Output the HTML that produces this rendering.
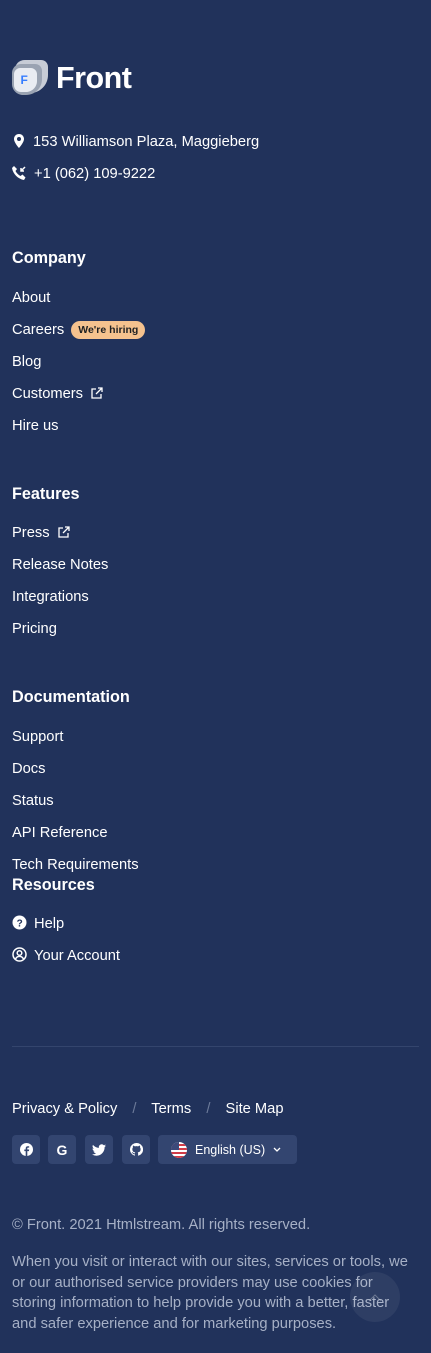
<!DOCTYPE html>
<html><head><meta charset="utf-8"><style>
*{margin:0;padding:0;box-sizing:border-box}
body{width:431px;height:1353px;background:#21325b;font-family:"Liberation Sans",Arial,sans-serif;color:#fff;position:relative;overflow:hidden}
.a{position:absolute;left:12px;white-space:nowrap;font-size:14.7px;line-height:20px}
.h{position:absolute;left:12px;font-size:16.2px;font-weight:bold;line-height:20px}
.ic{display:inline-block;vertical-align:-2px;margin-right:7px}
.badge{display:inline-block;background:#f5c28e;color:#1e2022;font-size:10.5px;font-weight:bold;padding:2px 7px;border-radius:10px;margin-left:7px;line-height:14px;vertical-align:1px}
.sb{position:absolute;top:1135px;width:28px;height:29px;background:#334570;border-radius:4px;display:flex;align-items:center;justify-content:center}
.g{color:#a6b0c6}
</style></head><body>
<div style="position:absolute;left:11px;top:59px;width:38px;height:38px">
<svg width="38" height="38" viewBox="0 0 38 38"><path d="M14 1h16c4 0 7 3 7 7v8c0 10-8 18-18 18h-4C8 34 4 30 4 24V11C4 5 8 1 14 1z" fill="#c7ccd6"/><path d="M10 5h14c4 0 7 3 7 7v8c0 9-7 16-16 16h-3C6 36 1 31 1 25V14C1 9 5 5 10 5z" fill="#9aa3b2"/><path d="M9 9h11c3 0 6 3 6 6v7c0 6-5 11-11 11H10c-4 0-7-3-7-7V15c0-3 3-6 6-6z" fill="#e9ecf2"/><text x="9.5" y="25" font-family="Liberation Sans" font-weight="bold" font-size="12" fill="#377dff">F</text></svg>
</div>
<div style="position:absolute;left:56px;top:59px;font-size:30.5px;font-weight:bold;line-height:38px;letter-spacing:-0.5px">Front</div>
<div class="a" style="top:132px"><svg class="ic" width="14" height="14" viewBox="0 0 14 14"><path d="M7 0C4 0 2 2.3 2 5c0 3.5 5 9 5 9s5-5.5 5-9C12 2.3 10 0 7 0zm0 7a2 2 0 110-4 2 2 0 010 4z" fill="#fff"/></svg>153 Williamson Plaza, Maggieberg</div>
<div class="a" style="top:164px"><svg class="ic" width="15" height="14" viewBox="0 0 15 14"><path d="M2 0l3 3-1.5 2c1 2 3 4 5 5L10.5 8.5l3 3L12 14C6 13 1 8 0 2z" fill="#fff"/><path d="M13 1l-4 4M9 2v3h3" stroke="#fff" stroke-width="1.5" fill="none"/></svg>+1 (062) 109-9222</div>

<div class="h" style="top:248px">Company</div>
<div class="a" style="top:288px">About</div>
<div class="a" style="top:320px">Careers<span class="badge">We're hiring</span></div>
<div class="a" style="top:352px">Blog</div>
<div class="a" style="top:384px">Customers <svg style="margin-left:4px;vertical-align:-1px" width="12" height="12" viewBox="0 0 12 12" fill="none" stroke="#fff" stroke-width="1.3"><path d="M5 2H1v9h9V7M7 1h4v4M11 1L5 7"/></svg></div>
<div class="a" style="top:416px">Hire us</div>

<div class="h" style="top:484px">Features</div>
<div class="a" style="top:523px">Press <svg style="margin-left:4px;vertical-align:-1px" width="12" height="12" viewBox="0 0 12 12" fill="none" stroke="#fff" stroke-width="1.3"><path d="M5 2H1v9h9V7M7 1h4v4M11 1L5 7"/></svg></div>
<div class="a" style="top:555px">Release Notes</div>
<div class="a" style="top:587px">Integrations</div>
<div class="a" style="top:619px">Pricing</div>

<div class="h" style="top:687px">Documentation</div>
<div class="a" style="top:727px">Support</div>
<div class="a" style="top:759px">Docs</div>
<div class="a" style="top:791px">Status</div>
<div class="a" style="top:823px">API Reference</div>
<div class="a" style="top:855px">Tech Requirements</div>
<div class="h" style="top:875px">Resources</div>
<div class="a" style="top:914px"><svg class="ic" width="15" height="15" viewBox="0 0 15 15"><circle cx="7.5" cy="7.5" r="7" fill="#fff"/><text x="4.6" y="11.5" font-size="10" font-weight="bold" font-family="Liberation Sans" fill="#21325b">?</text></svg>Help</div>
<div class="a" style="top:946px"><svg class="ic" width="15" height="15" viewBox="0 0 15 15" fill="none" stroke="#fff" stroke-width="1.5"><circle cx="7.5" cy="7.5" r="6.5"/><circle cx="7.5" cy="6" r="2.3"/><path d="M3.5 12c1-2 2.5-2.6 4-2.6s3 .6 4 2.6"/></svg>Your Account</div>

<div style="position:absolute;left:12px;right:12px;top:1046px;height:1px;background:#34456d"></div>
<div class="a" style="top:1099px">Privacy &amp; Policy <span style="color:#6c7a99;margin:0 11px">/</span> Terms <span style="color:#6c7a99;margin:0 11px">/</span> Site Map</div>
<div class="sb" style="left:12px"><svg width="13" height="13" viewBox="0 0 16 16"><circle cx="8" cy="8" r="8" fill="#fff"/><path d="M9 16V10h2l.3-2H9V6.7c0-.6.3-1 1-1h1.3V4H9.5C8 4 7 5 7 6.5V8H5.3v2H7v6z" fill="#334570"/></svg></div>
<div class="sb" style="left:48px"><span style="font-weight:bold;font-size:14px">G</span></div>
<div class="sb" style="left:85px"><svg width="14" height="12" viewBox="0 0 16 13"><path d="M16 1.5a6.5 6.5 0 01-1.9.5A3.3 3.3 0 0015.6.2a6.6 6.6 0 01-2.1.8A3.3 3.3 0 007.9 4 9.3 9.3 0 011.1.6a3.3 3.3 0 001 4.4 3.3 3.3 0 01-1.5-.4 3.3 3.3 0 002.6 3.2 3.3 3.3 0 01-1.5.1 3.3 3.3 0 003.1 2.3A6.6 6.6 0 010 11.5 9.3 9.3 0 005 13c6 0 9.4-5 9.4-9.4v-.4A6.7 6.7 0 0016 1.5z" fill="#fff"/></svg></div>
<div class="sb" style="left:122px"><svg width="13" height="13" viewBox="0 0 16 16"><path d="M8 0a8 8 0 00-2.5 15.6c.4 0 .5-.2.5-.4v-1.4c-2.2.5-2.7-1-2.7-1-.4-.9-.9-1.2-.9-1.2-.7-.5.1-.5.1-.5.8.1 1.2.8 1.2.8.7 1.2 1.900.9 2.3.7.1-.5.3-.9.5-1.100-1.8-.2-3.6-.9-3.6-4 0-.9.3-1.6.8-2.1-.1-.2-.4-1 .1-2.1 0 0 .7-.2 2.2.8a7.6 7.6 0 014 0c1.5-1 2.2-.8 2.2-.8.4 1.1.2 1.9.1 2.1.5.6.8 1.3.8 2.1 0 3.1-1.9 3.8-3.6 4 .3.3.5.8.5 1.5v2.2c0 .2.1.5.6.4A8 8 0 008 0z" fill="#fff"/></svg></div>
<div class="sb" style="left:158px;width:139px;justify-content:flex-start;padding-left:13px;font-size:12.5px">
<svg width="16" height="16" viewBox="0 0 16 16" style="margin-right:8px"><defs><clipPath id="c"><circle cx="8" cy="8" r="8"/></clipPath></defs><g clip-path="url(#c)"><rect width="16" height="16" fill="#fff"/><rect y="2" width="16" height="2" fill="#d03c48"/><rect y="6" width="16" height="2" fill="#d03c48"/><rect y="10" width="16" height="2" fill="#d03c48"/><rect y="14" width="16" height="2" fill="#d03c48"/><rect width="8" height="8" fill="#3c4a7a"/></g></svg>English (US)<svg style="margin-left:8px" width="8" height="5" viewBox="0 0 8 5" fill="none" stroke="#fff" stroke-width="1.3"><path d="M1 1l3 3 3-3"/></svg></div>

<div class="a g" style="top:1215px">© Front. 2021 Htmlstream. All rights reserved.</div>
<div class="a g" style="top:1252px;line-height:20.7px">When you visit or interact with our sites, services or tools, we<br>or our authorised service providers may use cookies for<br>storing information to help provide you with a better, faster<br>and safer experience and for marketing purposes.</div>
<div style="position:absolute;left:350px;top:1272px;width:50px;height:50px;border-radius:50%;background:rgba(255,255,255,0.06)"><svg style="position:absolute;left:18px;top:22px" width="14" height="8" viewBox="0 0 14 8" fill="none" stroke="rgba(255,255,255,0.3)" stroke-width="1"><path d="M1 7l6-6 6 6"/></svg></div>
</body></html>
